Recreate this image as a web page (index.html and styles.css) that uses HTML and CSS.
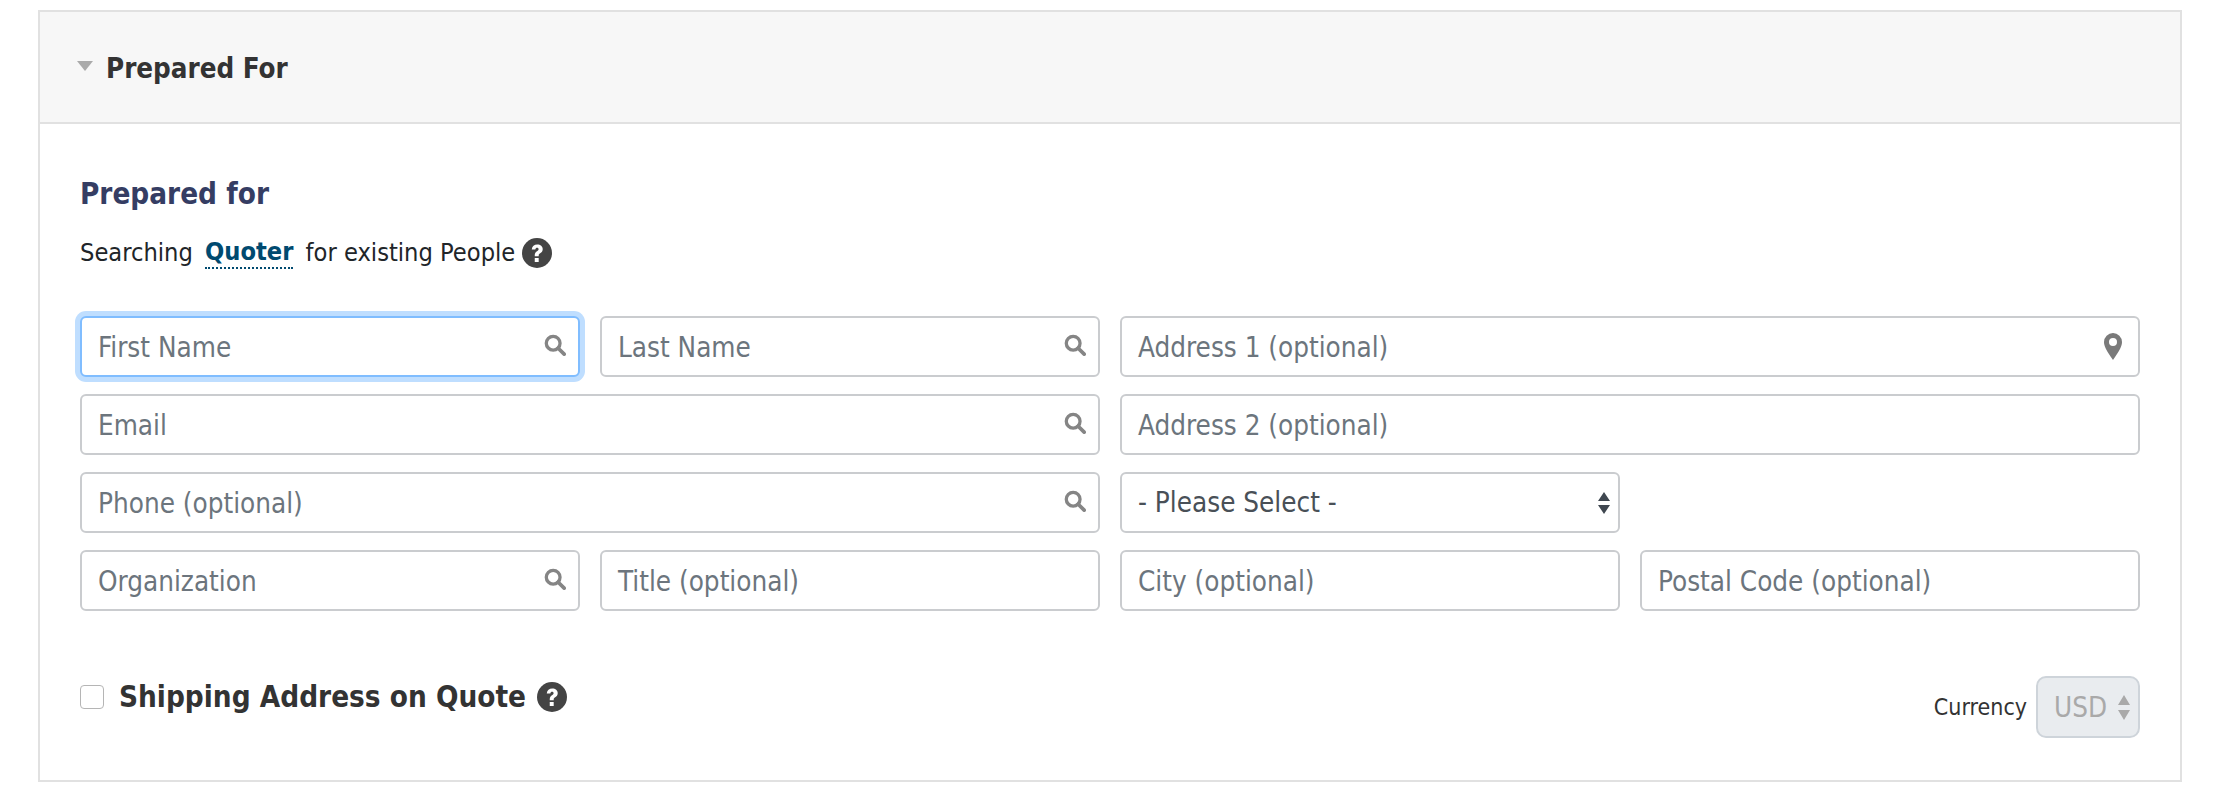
FILE: index.html
```html
<!DOCTYPE html>
<html lang="en">
<head>
<meta charset="utf-8">
<title>Prepared For</title>
<link rel="stylesheet" href="styles.css">
</head>
<body>
<svg class="defs" width="0" height="0" aria-hidden="true">
  <symbol id="search" viewBox="0 0 24 24"><circle cx="10" cy="10" r="7.5" fill="none" stroke="currentColor" stroke-width="3.6"/><path d="M15.5 15.500 22 22" fill="none" stroke="currentColor" stroke-width="4" stroke-linecap="round"/></symbol>
  <symbol id="help" viewBox="0 0 32 32"><circle cx="16" cy="16" r="16" fill="currentColor"/><path d="M10.4 12.2C10.8 8.9 13 7 16.3 7c3.4 0 5.8 2 5.8 4.9 0 2.2-1.100 3.300-2.700 4.400-1.200.8-1.600 1.300-1.600 2.500v.7h-4.200v-1c0-2.200.7-3.200 2.400-4.400 1.200-.8 1.700-1.300 1.700-2.300 0-.9-.7-1.500-1.600-1.500-1 0-1.700.7-1.900 1.900zM13.600 21.300h4.200v4.200h-4.200z" fill="#fff"/></symbol>
</svg>
<section class="card">
  <header class="card-head">
    <span class="caret"></span>
    <span class="card-title">Prepared For</span>
  </header>
  <div class="card-body">
    <h2 class="section-title">Prepared for</h2>
    <p class="search-line">Searching <a class="source">Quoter</a> for existing People <svg class="help"><use href="#help"/></svg></p>
    <div class="form-grid">
      <div class="field focused"><span class="ph">First Name</span><svg class="ico"><use href="#search"/></svg></div>
      <div class="field"><span class="ph">Last Name</span><svg class="ico"><use href="#search"/></svg></div>
      <div class="field span2"><span class="ph">Address 1 (optional)</span>
        <svg class="pin" viewBox="0 0 18 27"><path fill-rule="evenodd" d="M9 0a9 9 0 0 1 9 9c0 4-2 8-9 18C2 17 0 13 0 9a9 9 0 0 1 9-9zm0 5a4 4 0 1 0 0 8 4 4 0 0 0 0-8z" fill="currentColor"/></svg></div>
      <div class="field span2"><span class="ph">Email</span><svg class="ico"><use href="#search"/></svg></div>
      <div class="field span2"><span class="ph">Address 2 (optional)</span></div>
      <div class="field span2"><span class="ph">Phone (optional)</span><svg class="ico"><use href="#search"/></svg></div>
      <div class="field select"><span>- Please Select -</span>
        <svg class="updown" viewBox="0 0 12 22"><path d="M6 0l6 9H0zM6 22l-6-9h12z" fill="currentColor"/></svg></div>
      <div class="blank"></div>
      <div class="field"><span class="ph">Organization</span><svg class="ico"><use href="#search"/></svg></div>
      <div class="field"><span class="ph">Title (optional)</span></div>
      <div class="field"><span class="ph">City (optional)</span></div>
      <div class="field"><span class="ph">Postal Code (optional)</span></div>
    </div>
    <div class="foot">
      <div class="shipping">
        <span class="check"></span>
        <span class="shipping-label">Shipping Address on Quote</span>
        <svg class="help"><use href="#help"/></svg>
      </div>
      <div class="currency">
        <span class="currency-label">Currency</span>
        <div class="currency-select"><span>USD</span>
          <svg class="updown-mini" viewBox="0 0 12 25"><path d="M6 0l6 10H0zM6 25l-6-10h12z" fill="currentColor"/></svg></div>
      </div>
    </div>
  </div>
</section>
</body>
</html>
```
FILE: styles.css
```css
* { box-sizing: border-box; }
html, body { margin: 0; padding: 0; background: #fff; }
body {
  padding: 10px 38px 0;
  font-family: "DejaVu Sans", Verdana, sans-serif;
  font-stretch: condensed;
  color: #333;
}
.defs { position: absolute; }
.card {
  height: 772px;
  border: 2px solid #e1e1e1;
}
.card-head {
  height: 112px;
  background: #f7f7f7;
  border-bottom: 2px solid #e1e1e1;
  display: flex;
  align-items: center;
  padding-left: 37px;
  gap: 13px;
}
.caret {
  width: 0; height: 0;
  border-left: 8px solid transparent;
  border-right: 8px solid transparent;
  border-top: 10px solid #aaa;
  margin-top: -2px;
}
.card-title { font-size: 27.5px; font-weight: 700; color: #333; padding-top: 2px; }
.card-body { padding: 50px 40px 0; }
.section-title { margin: 0; font-size: 29.4px; line-height: 40px; font-weight: 700; color: #353d63; }
.search-line {
  margin: 21px 0 0;
  font-size: 25.2px; line-height: 36px;
  color: #212529;
  display: flex; align-items: center;
  white-space: pre;
}
.source {
  font-weight: 700; color: #004a70;
  margin: 0 5px;
  line-height: 30px;
  border-bottom: 2px dotted #004a70;
}
.help { width: 30px; height: 30px; color: #444; flex: none; margin-left: 0; }
.form-grid {
  margin-top: 45px;
  display: grid;
  grid-template-columns: repeat(4, 500px);
  column-gap: 20px;
  row-gap: 17px;
}
.span2 { grid-column: span 2; }
.field {
  height: 61px;
  border: 2px solid #cacccf;
  border-radius: 6px;
  background: #fff;
  padding: 2px 15px 0 16px;
  display: flex; align-items: center; justify-content: space-between;
  font-size: 27.6px;
  color: #495057;
}
.select { padding-top: 0; }
.focused { border-color: #80bdff; box-shadow: 0 0 0 5px #bfdeff; }
.ph { color: #6c757d; }
.ico { width: 22px; height: 22px; color: #858585; margin: -5px -3px 0 0; }
.pin { width: 18px; height: 27px; color: #7a7a7a; margin: -2px 1px 0 0; }
.updown { width: 12px; height: 22px; color: #3f4750; margin-right: -7px; }
.foot {
  margin-top: 64px;
  display: flex; justify-content: space-between; align-items: flex-start;
}
.shipping { display: flex; align-items: center; gap: 11px; margin-top: 5px; }
.check {
  width: 24px; height: 24px;
  border: 1px solid #b5b5b5; border-radius: 4px; background: #fff;
  margin-right: 4px;
}
.shipping-label { font-size: 29.4px; font-weight: 700; color: #333; }
.currency { display: flex; align-items: center; gap: 9px; margin-top: 1px; }
.currency-label { font-size: 23px; color: #333; }
.currency-select {
  width: 104px; height: 62px;
  background: #e9ecef;
  border: 2px solid #ced4da; border-radius: 10px;
  display: flex; align-items: center; justify-content: space-between;
  padding: 0 8px 0 16px;
  font-size: 27.6px; color: #a9a9a9;
}
.updown-mini { width: 12px; height: 25px; color: #a9a9a9; }
```
